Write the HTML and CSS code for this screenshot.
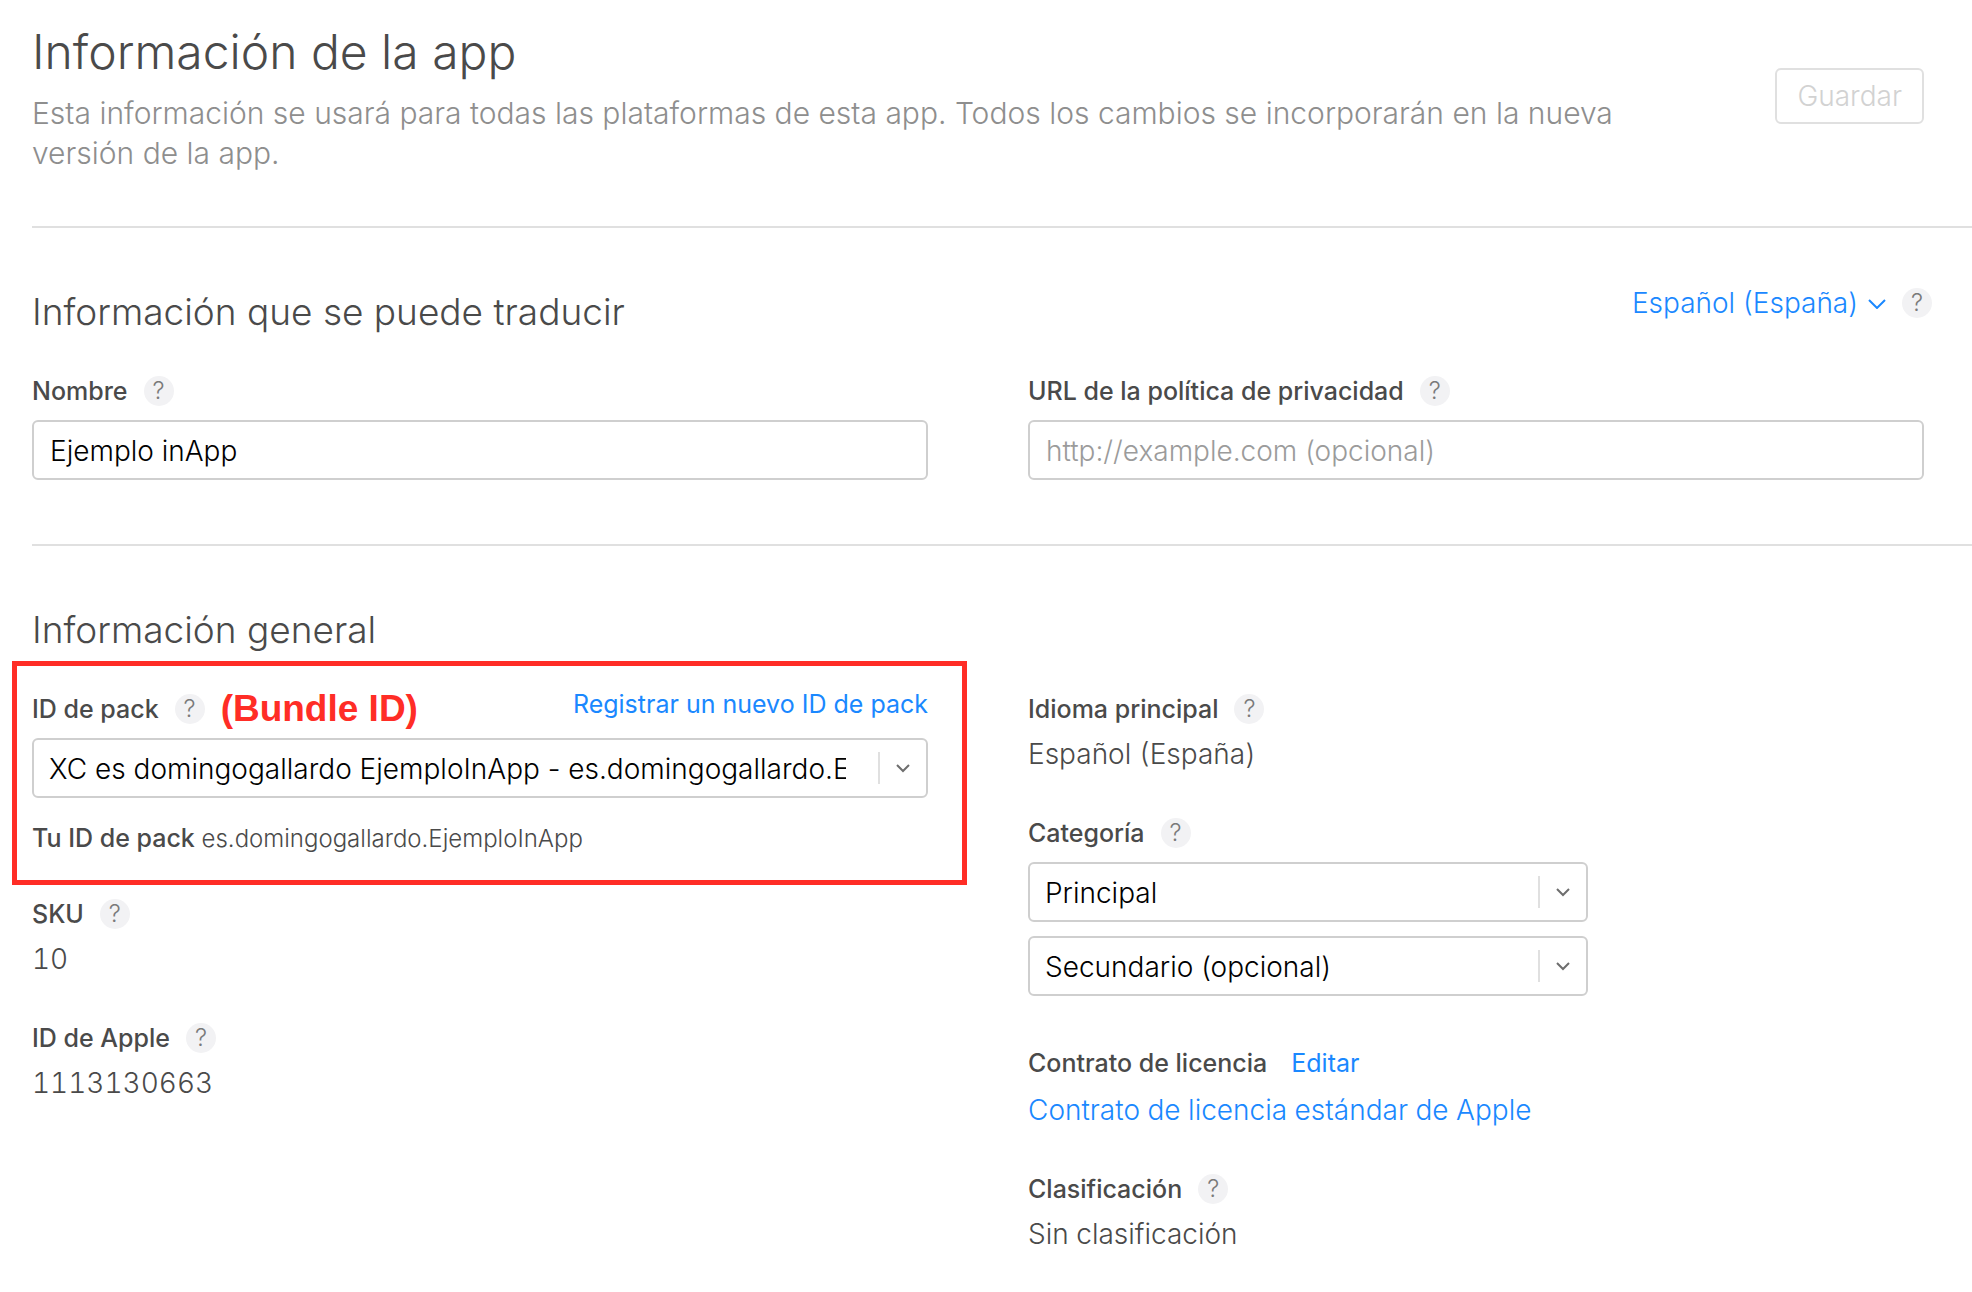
FILE: index.html
```html
<!DOCTYPE html>
<html lang="es">
<head>
<meta charset="utf-8">
<title>Información de la app</title>
<meta name="viewport" content="width=device-width, initial-scale=1">
<link rel="stylesheet" href="styles.css">
</head>
<body>
<main class="page">
  <header class="page-header">
    <div class="page-intro">
      <h1 class="page-title">Información de la app</h1>
      <p class="page-description">Esta información se usará para todas las plataformas de esta app. Todos los cambios se incorporarán en la nueva versión de la app.</p>
    </div>
    <button class="save-button" type="button" disabled>Guardar</button>
  </header>

  <section class="section">
    <div class="section-header">
      <h2 class="section-title">Información que se puede traducir</h2>
      <div class="language">
        <button class="language-button" type="button">Español (España)
          <svg class="language-chevron" viewBox="0 0 18 12" aria-hidden="true"><path d="M1 3l8 8 8-8"/></svg>
        </button>
        <button class="help" type="button">?</button>
      </div>
    </div>
    <div class="columns">
      <div class="field">
        <div class="label-row">
          <label class="label" for="name">Nombre</label>
          <button class="help" type="button">?</button>
        </div>
        <input class="text-input" id="name" type="text" value="Ejemplo inApp">
      </div>
      <div class="field">
        <div class="label-row">
          <label class="label" for="privacy-url">URL de la política de privacidad</label>
          <button class="help" type="button">?</button>
        </div>
        <input class="text-input" id="privacy-url" type="text" placeholder="http://example.com (opcional)">
      </div>
    </div>
  </section>

  <section class="section">
    <div class="section-header">
      <h2 class="section-title">Información general</h2>
    </div>
    <div class="columns">
      <div class="stack">
        <div class="field highlighted">
          <div class="label-row">
            <label class="label" for="bundle">ID de pack</label>
            <button class="help" type="button">?</button>
            <strong class="annotation">(Bundle ID)</strong>
            <a class="link link-small link-register" href="#">Registrar un nuevo ID de pack</a>
          </div>
          <div class="select-box">
            <select class="select" id="bundle">
              <option>XC es domingogallardo EjemploInApp - es.domingogallardo.EjemploInApp</option>
            </select>
            <svg class="select-arrow" viewBox="0 0 32 32" aria-hidden="true"><path class="divider" d="M1 0v32"/><path class="chevron" d="M19 13l6 6 6-6"/></svg>
          </div>
          <p class="bundle-note"><b class="bundle-note-label">Tu ID de pack</b> es.domingogallardo.EjemploInApp</p>
        </div>
        <div class="field">
          <div class="label-row">
            <span class="label">SKU</span>
            <button class="help" type="button">?</button>
          </div>
          <p class="value">10</p>
        </div>
        <div class="field">
          <div class="label-row">
            <span class="label">ID de Apple</span>
            <button class="help" type="button">?</button>
          </div>
          <p class="value">1113130663</p>
        </div>
      </div>

      <div class="stack">
        <div class="field">
          <div class="label-row">
            <span class="label">Idioma principal</span>
            <button class="help" type="button">?</button>
          </div>
          <p class="value">Español (España)</p>
        </div>
        <div class="field categories">
          <div class="label-row">
            <label class="label" for="primary">Categoría</label>
            <button class="help" type="button">?</button>
          </div>
          <div class="select-box">
            <select class="select" id="primary"><option>Principal</option></select>
            <svg class="select-arrow" viewBox="0 0 32 32" aria-hidden="true"><path class="divider" d="M1 0v32"/><path class="chevron" d="M19 13l6 6 6-6"/></svg>
          </div>
          <div class="select-box">
            <select class="select" id="secondary" aria-label="Categoría secundaria"><option>Secundario (opcional)</option></select>
            <svg class="select-arrow" viewBox="0 0 32 32" aria-hidden="true"><path class="divider" d="M1 0v32"/><path class="chevron" d="M19 13l6 6 6-6"/></svg>
          </div>
        </div>
        <div class="field">
          <div class="label-row label-row-license">
            <span class="label">Contrato de licencia</span>
            <a class="link link-small" href="#">Editar</a>
          </div>
          <p class="value"><a class="link" href="#">Contrato de licencia estándar de Apple</a></p>
        </div>
        <div class="field">
          <div class="label-row">
            <span class="label">Clasificación</span>
            <button class="help" type="button">?</button>
          </div>
          <p class="value">Sin clasificación</p>
        </div>
      </div>
    </div>
  </section>
</main>
</body>
</html>
```

FILE: styles.css
```css
* {
  box-sizing: border-box;
}

body {
  margin: 0;
  background: #fff;
  color: #4a4a4a;
  font-family: Inter, "Liberation Sans", sans-serif;
  font-size: 28px;
  font-weight: 300;
  line-height: 36px;
}

h1,
h2,
p {
  margin: 0;
  font-weight: 300;
}

button,
input,
select {
  font: inherit;
}

.page {
  padding-left: 32px;
}

.page-header {
  display: flex;
  align-items: flex-start;
  gap: 120px;
  padding: 20px 48px 53px 0;
}

.page-intro {
  flex: 1;
}

.page-title {
  font-size: 48px;
  line-height: 64px;
}

.page-description {
  margin-top: 9px;
  color: #8e8e8e;
  font-size: 30px;
  line-height: 40px;
}

.save-button {
  height: 56px;
  margin-top: 48px;
  padding: 0 20px;
  border: 2px solid #e0e0e0;
  border-radius: 6px;
  background: #fff;
  color: #d2d2d2;
}

.section {
  padding: 60px 48px 64px 0;
  border-top: 2px solid #e0e0e0;
}

.section-header {
  display: flex;
  justify-content: space-between;
  align-items: flex-start;
  margin-bottom: 40px;
}

.section-title {
  font-size: 37px;
  line-height: 48px;
}

.language {
  display: flex;
  align-items: center;
  gap: 16px;
  height: 30px;
  margin-right: -8px;
}

.language-button {
  display: flex;
  align-items: center;
  gap: 10px;
  padding: 0;
  border: 0;
  background: none;
  color: #1a88ff;
}

.language-chevron {
  width: 18px;
  height: 12px;
  fill: none;
  stroke: #1a88ff;
  stroke-width: 2;
}

.help {
  width: 30px;
  height: 30px;
  padding: 0;
  border: 0;
  border-radius: 50%;
  background: #f2f2f4;
  color: #7a7a7a;
  font-size: 24px;
  line-height: 30px;
}

.columns {
  display: grid;
  grid-template-columns: 1fr 1fr;
  column-gap: 100px;
}

.columns > * {
  min-width: 0;
}

.stack {
  display: flex;
  flex-direction: column;
  gap: 46px;
}

.label-row {
  display: flex;
  align-items: center;
  gap: 16px;
  height: 30px;
  margin-bottom: 14px;
}

.label-row-license {
  gap: 24px;
  margin-bottom: 16px;
}

.label {
  font-size: 25px;
  font-weight: 500;
  line-height: 30px;
}

.text-input,
.select {
  display: block;
  width: 100%;
  height: 60px;
  border: 2px solid #cfcfcf;
  border-radius: 6px;
  background: #fff;
  color: #000;
}

.text-input {
  padding: 2px 16px 0;
}

.text-input::placeholder {
  color: #9b9b9b;
}

.select-box {
  display: grid;
  align-items: center;
}

.select-box > * {
  grid-area: 1 / 1;
}

.select {
  padding: 2px 80px 0 15px;
  appearance: none;
}

.select-arrow {
  justify-self: end;
  width: 32px;
  height: 32px;
  margin-right: 18px;
  fill: none;
  stroke-width: 2;
  pointer-events: none;
}

.divider {
  stroke: #e0e0e0;
}

.chevron {
  stroke: #6e6e6e;
}

.categories {
  width: 560px;
  max-width: 100%;
  margin-bottom: 6px;
}

.select-box + .select-box {
  margin-top: 14px;
}

.value {
  margin-top: -2px;
  font-variant-numeric: tabular-nums;
}

.link {
  color: #1a88ff;
  text-decoration: none;
}

.link-small {
  font-size: 25px;
  font-weight: 400;
  line-height: 30px;
}

.link-register {
  align-self: flex-start;
  margin-left: auto;
  line-height: 20px;
}

/* Red frame and note that point out the bundle identifier */
.highlighted {
  position: relative;
  margin-bottom: -4px;
}

.highlighted::after {
  content: "";
  position: absolute;
  inset: -33px -39px -28px -20px;
  border: 5px solid #ff2d26;
  pointer-events: none;
}

.annotation {
  color: #ff2d26;
  font-family: "Liberation Sans", sans-serif;
  font-size: 37px;
  font-weight: 700;
  line-height: 30px;
}

.bundle-note {
  margin-top: 22px;
  font-size: 24px;
}

.bundle-note-label {
  font-size: 25px;
  font-weight: 500;
}
```
